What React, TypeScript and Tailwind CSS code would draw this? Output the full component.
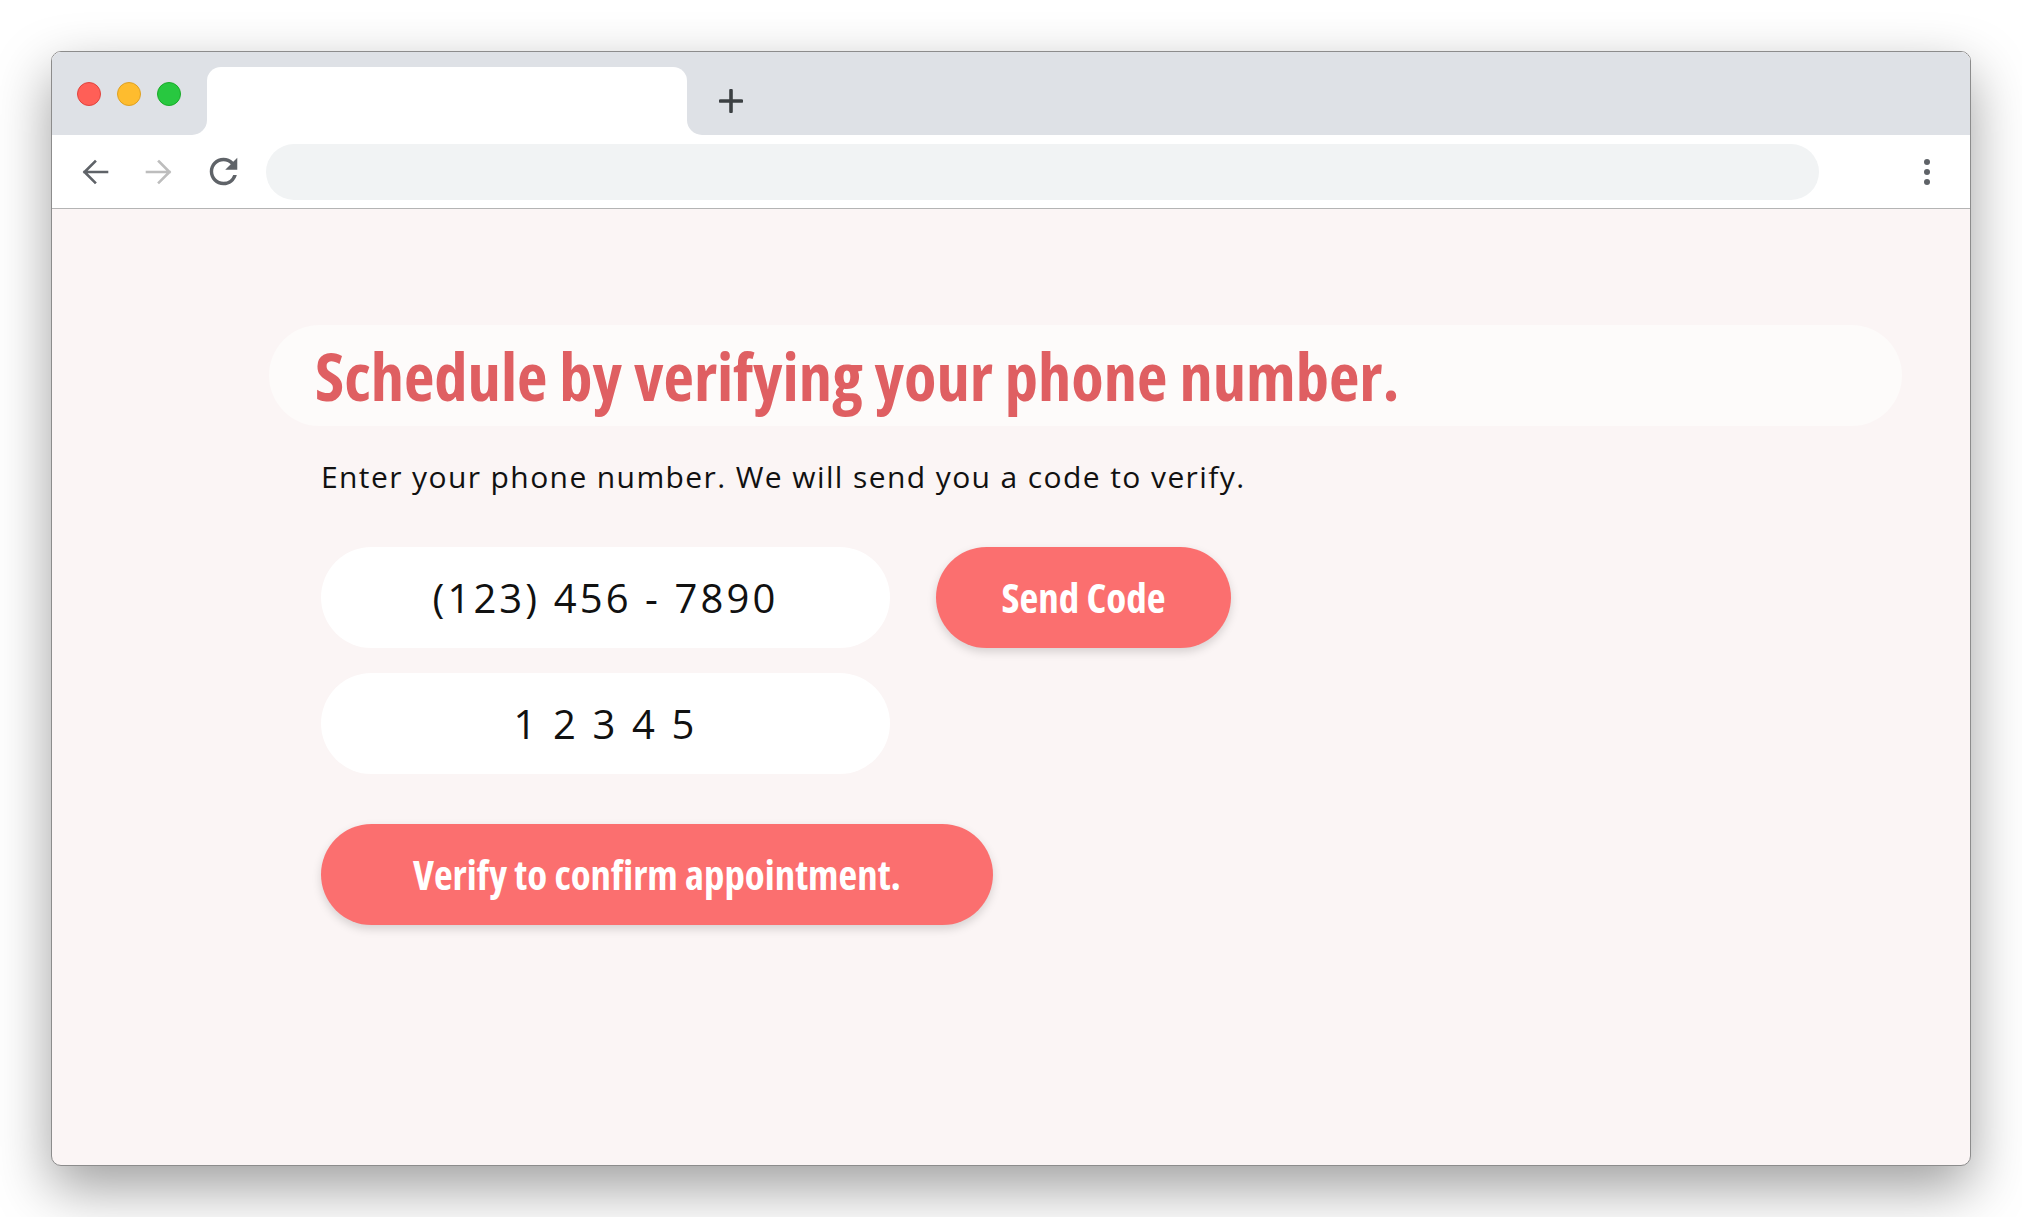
import React from "react";

function TrafficLights() {
  return (
    <div className="flex items-center gap-4">
      <span className="h-6 w-6 rounded-full border border-[#e0443e] bg-[#ff5f57]" />
      <span className="h-6 w-6 rounded-full border border-[#dea123] bg-[#febc2e]" />
      <span className="h-6 w-6 rounded-full border border-[#1aab29] bg-[#28c840]" />
    </div>
  );
}

function TabBar() {
  return (
    <div className="flex h-[83px] bg-white">
      <div className="flex w-[155px] items-center rounded-br-[15px] bg-[#dee1e6] pl-[25px]">
        <TrafficLights />
      </div>
      <div className="flex w-[480px] flex-col bg-[#dee1e6]">
        <div className="mt-[15px] flex-1 rounded-t-[14px] bg-white" />
      </div>
      <div className="flex flex-1 items-center rounded-bl-[15px] bg-[#dee1e6] pl-[32px] pt-[15px]">
        <svg width="24" height="24" viewBox="0 0 24 24">
          <path d="M12 1.5v21M1.5 12h21" stroke="#3c4043" strokeWidth="3.6" strokeLinecap="round" />
        </svg>
      </div>
    </div>
  );
}

function Toolbar() {
  return (
    <div className="flex h-[74px] items-center border-b border-[#b4b4b4] bg-white pl-[29px] pr-[29px]">
      <svg width="28" height="26" viewBox="0 0 28 26" fill="none">
        <path d="M26 13H3.5M14 2.5L3.5 13L14 23.5" stroke="#5f6368" strokeWidth="2.6" strokeLinecap="square" />
      </svg>
      <svg className="ml-[36px]" width="28" height="26" viewBox="0 0 28 26" fill="none">
        <path d="M2 13h22.5M14 2.5L24.5 13L14 23.5" stroke="#bdbdbd" strokeWidth="2.6" strokeLinecap="square" />
      </svg>
      <svg className="ml-[35px]" width="31" height="31" viewBox="3 3 18 18">
        <path
          fill="#5f6368"
          d="M17.65 6.35A7.958 7.958 0 0012 4c-4.42 0-7.99 3.58-7.99 8s3.57 8 7.99 8c3.73 0 6.84-2.55 7.73-6h-2.08A5.99 5.99 0 0112 18c-3.31 0-6-2.69-6-6s2.69-6 6-6c1.66 0 3.14.69 4.22 1.78L13 11h7V4l-2.35 2.35z"
        />
      </svg>
      <div className="ml-[27px] h-[56px] flex-1 rounded-full bg-[#f1f3f4]" />
      <div className="ml-[94px] flex w-[28px] flex-col items-center gap-1">
        <span className="h-[6px] w-[6px] rounded-full bg-[#5f6368]" />
        <span className="h-[6px] w-[6px] rounded-full bg-[#5f6368]" />
        <span className="h-[6px] w-[6px] rounded-full bg-[#5f6368]" />
      </div>
    </div>
  );
}

function Field({ value }: { value: string }) {
  return (
    <div className="flex h-[101px] w-[569px] items-center justify-center rounded-full bg-white text-[40px] tracking-[3.1px] text-[#111]">
      {value}
    </div>
  );
}

function VerifyForm() {
  return (
    <div className="flex-1 pl-[217px] pr-[68px] pt-[116px]">
      <div className="flex h-[101px] items-center rounded-full bg-[#fdfbfa] pl-[46px]">
        <h1 className="text-[66.5px] font-bold font-stretch-condensed text-[#df5f62]">
          Schedule by verifying your phone number.
        </h1>
      </div>
      <div className="pl-[52px]">
        <p className="mt-[30px] text-[30px] leading-[41px] tracking-[1.4px] text-[#111]">
          Enter your phone number. We will send you a code to verify.
        </p>
        <div className="mt-[50px] flex gap-[46px]">
          <Field value="(123) 456 - 7890" />
          <button className="h-[101px] w-[295px] rounded-full bg-[#fb6f6f] text-[41px] font-bold font-stretch-condensed text-white shadow-[0_4px_10px_rgba(0,0,0,0.15)]">
            Send Code
          </button>
        </div>
        <div className="mt-[25px]">
          <Field value="1 2 3 4 5" />
        </div>
        <button className="mt-[50px] h-[101px] w-[672px] rounded-full bg-[#fb6f6f] text-[40.8px] font-bold font-stretch-condensed text-white shadow-[0_4px_10px_rgba(0,0,0,0.15)]">
          Verify to confirm appointment.
        </button>
      </div>
    </div>
  );
}

export default function App() {
  return (
    <div className="min-h-screen w-full bg-white pl-[51px] pt-[51px] font-['Open_Sans',sans-serif]">
      <div className="flex h-[1115px] w-[1920px] flex-col overflow-hidden rounded-[10px] border border-[#8c8c8c] bg-[#fbf5f5] shadow-[0_22px_55px_rgba(0,0,0,0.38)]">
        <TabBar />
        <Toolbar />
        <VerifyForm />
      </div>
    </div>
  );
}
